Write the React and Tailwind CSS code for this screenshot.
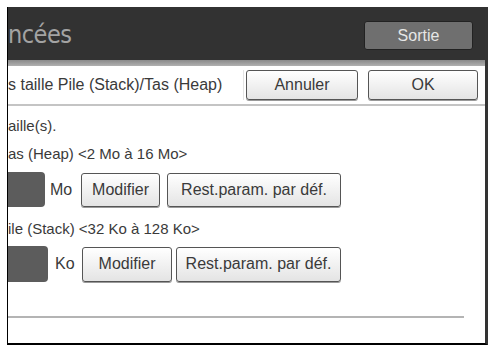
export default function App() {
  const font = { fontFamily: '"Liberation Sans", Arial, sans-serif' };
  const narrow = { fontFamily: '"Liberation Sans Narrow", "DejaVu Sans Condensed", "Liberation Sans", sans-serif' };
  const btn =
    "flex items-center justify-center rounded-[3px] border border-[#555] bg-gradient-to-b from-white to-[#e4e4e4] text-[16px] text-[#3a3a3a] shadow-[0_1px_0_#9a9a9a]";
  return (
    <div
      className="w-[490px] h-[348px] bg-white pt-[7px] pl-[7px] pr-[2px] pb-[3px] overflow-hidden"
      style={font}
    >
      <div className="flex flex-col h-full border-l border-l-black border-r-[3px] border-r-[#333] border-b-2 border-b-black bg-white">
        {/* Header */}
        <div className="h-[53px] bg-[#323232] flex items-start justify-between shrink-0">
          <div className="pt-[14px] text-[25px] leading-[28px] text-[#a3a3a3] tracking-[-0.5px]" style={narrow}>
            ncées
          </div>
          <div className="mt-[14px] mr-[12px] w-[109px] h-[29px] rounded-[3px] border border-[#222] bg-[#6f6f6f] flex items-center justify-center text-[16px] text-[#e6e6e6]">
            Sortie
          </div>
        </div>
        <div className="h-[6px] shrink-0 bg-gradient-to-b from-[#8a8a8a] to-[#b0b0b0]" />
        {/* Row 1 */}
        <div className="h-[40px] shrink-0 flex items-center border-b-2 border-b-[#c4c4c4]">
          <div className="w-[236px] h-[30px] flex items-center text-[16px] text-[#3a3a3a] border-r border-[#e4e4e4] whitespace-nowrap overflow-hidden">
            s taille Pile (Stack)/Tas (Heap)
          </div>
          <div className={btn + " ml-[2px] w-[112px] h-[30px]"}>Annuler</div>
          <div className={btn + " ml-[10px] w-[110px] h-[30px]"}>OK</div>
        </div>
        {/* Content */}
        <div className="flex flex-col text-[15px] text-[#3a3a3a]">
          <div className="h-[18px] mt-[11px] leading-[18px]">aille(s).</div>
          <div className="h-[18px] mt-[10px] leading-[18px]">as (Heap) &lt;2 Mo à 16 Mo&gt;</div>
          <div className="flex items-center mt-[9px] h-[35px]">
            <div className="w-[37px] h-[35px] bg-[#5c5c5c] rounded-r-[4px]" />
            <div className="ml-[5px] w-[24px] text-[16px]">Mo</div>
            <div className={btn + " ml-[7px] w-[79px] h-[34px]"}>Modifier</div>
            <div className={btn + " ml-[7px] w-[174px] h-[34px]"}>Rest.param. par déf.</div>
          </div>
          <div className="h-[18px] mt-[13px] leading-[18px]">ile (Stack) &lt;32 Ko à 128 Ko&gt;</div>
          <div className="flex items-center mt-[8px] h-[36px]">
            <div className="w-[40px] h-[36px] bg-[#5c5c5c] rounded-r-[4px]" />
            <div className="ml-[7px] w-[24px] text-[16px]">Ko</div>
            <div className={btn + " ml-[3px] w-[90px] h-[35px]"}>Modifier</div>
            <div className={btn + " ml-[4px] w-[165px] h-[35px]"}>Rest.param. par déf.</div>
          </div>
          <div className="mt-[34px] w-[456px] h-[2px] bg-[#b4b4b4]" />
        </div>
      </div>
    </div>
  );
}
